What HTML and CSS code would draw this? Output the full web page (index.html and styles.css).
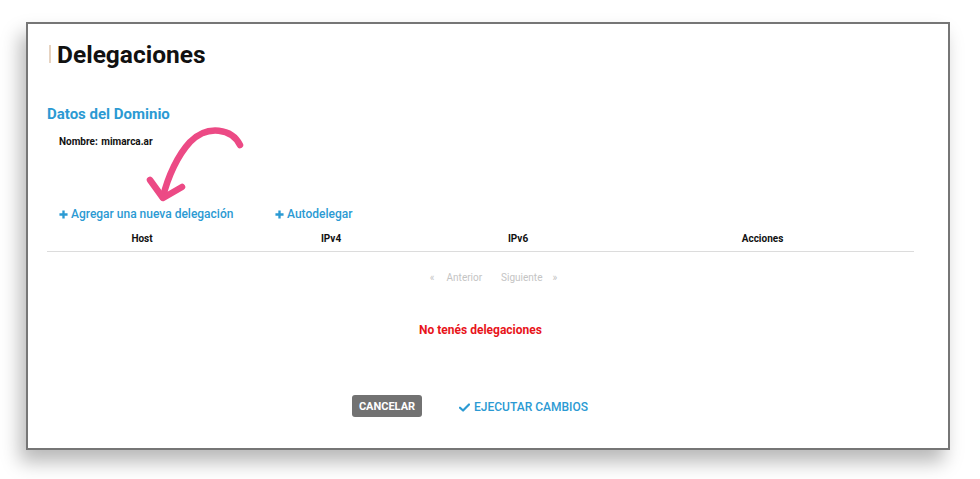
FILE: index.html
```html
<!DOCTYPE html>
<html lang="es">
<head>
<meta charset="utf-8">
<title>Delegaciones</title>
<link rel="stylesheet" href="styles.css">
</head>
<body>
<div class="frame">
  <header class="page-head">
    <span class="head-bar"></span>
    <h1 class="page-title">Delegaciones</h1>
  </header>

  <section class="domain">
    <h2 class="section-title">Datos del Dominio</h2>
    <p class="domain-name"><span class="label">Nombre:</span> mimarca.ar</p>
  </section>

  <div class="actions">
    <a class="action-link action-add" href="#"><svg class="plus" viewBox="0 0 10 10" width="9" height="9" aria-hidden="true"><path d="M5 0.5 V9.5 M0.5 5 H9.5" stroke="currentColor" stroke-width="2.6"/></svg>Agregar una nueva delegación</a>
    <a class="action-link" href="#"><svg class="plus" viewBox="0 0 10 10" width="9" height="9" aria-hidden="true"><path d="M5 0.5 V9.5 M0.5 5 H9.5" stroke="currentColor" stroke-width="2.6"/></svg>Autodelegar</a>
  </div>

  <div class="table-head">
    <div class="th">Host</div>
    <div class="th">IPv4</div>
    <div class="th">IPv6</div>
    <div class="th">Acciones</div>
  </div>

  <nav class="pager">
    <span class="pager-item"><span class="pager-mark">«</span>Anterior</span>
    <span class="pager-item">Siguiente<span class="pager-mark pager-mark-next">»</span></span>
  </nav>

  <p class="empty">No tenés delegaciones</p>

  <div class="footer-buttons">
    <button class="btn-cancel" type="button">CANCELAR</button>
    <a class="btn-run" href="#">
      <svg class="check" viewBox="0 0 12 10" width="11" height="9" aria-hidden="true">
        <path d="M1 5.2 L4.4 8.4 L11 1.6" fill="none" stroke="currentColor" stroke-width="2.4" stroke-linecap="round" stroke-linejoin="round"/>
      </svg>
      EJECUTAR CAMBIOS
    </a>
  </div>

  <svg class="hint-arrow" viewBox="0 0 110 90" width="110" height="90" aria-hidden="true">
    <path d="M100 25 C 92 9, 68 4, 50 22 C 38 35, 28 56, 23 77" fill="none" stroke="#ec4a85" stroke-width="6.5" stroke-linecap="round"/>
    <path d="M10 60 L23 78 L42 67" fill="none" stroke="#ec4a85" stroke-width="6.5" stroke-linecap="round" stroke-linejoin="round"/>
  </svg>
</div>
</body>
</html>
```

FILE: styles.css
```css
* {
  box-sizing: border-box;
}

html, body {
  margin: 0;
  background: #ffffff;
}

body {
  font-family: Roboto, "Liberation Sans", Arial, sans-serif;
  color: #111;
  padding: 22px 0 0 26px;
  min-height: 479px;
}

.frame {
  position: relative;
  width: 924px;
  height: 428px;
  border: 2px solid #767676;
  background: #fff;
  box-shadow: -6px 12px 18px rgba(0, 0, 0, 0.28);
  padding: 16px 34px 0 19px;
}

/* heading */
.page-head {
  display: flex;
  align-items: center;
  height: 28px;
}

.head-bar {
  width: 2px;
  height: 18px;
  background: #e6d3c1;
  margin: 0 6px 0 2px;
}

.page-title {
  margin: 0;
  font-size: 24.5px;
  font-weight: 700;
  color: #111;
}

/* domain data */
.domain {
  margin-top: 37px;
}

.section-title {
  margin: 0;
  font-size: 15px;
  font-weight: 700;
  color: #2b9ad3;
  line-height: 18px;
}

.domain-name {
  margin: 13px 0 0 12px;
  font-size: 10px;
  font-weight: 700;
  line-height: 12px;
}

.label {
  margin-right: 1px;
}

/* actions */
.actions {
  display: flex;
  margin: 58px 0 0 12px;
  height: 16px;
  align-items: center;
}

.action-link {
  display: flex;
  align-items: center;
  gap: 3px;
  font-size: 12px;
  font-weight: 500;
  color: #2b9ad3;
  text-decoration: none;
}

.action-add {
  width: 216px;
}

.plus {
  display: block;
}

/* table header */
.table-head {
  display: grid;
  grid-template-columns: 190px 188px 186px 303px;
  margin-top: 6px;
  height: 24px;
  border-bottom: 1px solid #dcdcdc;
  align-items: center;
}

.th {
  text-align: center;
  font-size: 10px;
  font-weight: 700;
  line-height: 12px;
  padding-bottom: 2px;
}

/* pagination */
.pager {
  display: flex;
  justify-content: center;
  gap: 19px;
  margin-top: 20px;
  padding-left: 26px;
  font-size: 10px;
  color: #c4c4c4;
  line-height: 12px;
}

.pager-mark {
  margin-right: 12px;
}

.pager-mark-next {
  margin: 0 0 0 10px;
}

.empty {
  margin: 39px 0 0;
  text-align: center;
  font-size: 12px;
  font-weight: 700;
  color: #e8141a;
  line-height: 14px;
}

/* footer buttons */
.footer-buttons {
  display: flex;
  align-items: center;
  margin: 58px 0 0 305px;
}

.btn-cancel {
  font-family: inherit;
  height: 22px;
  width: 70px;
  border: none;
  border-radius: 3px;
  background: #727272;
  color: #fff;
  font-size: 11px;
  font-weight: 700;
  padding: 0;
}

.btn-run {
  margin: 2px 0 0 37px;
  display: flex;
  align-items: center;
  gap: 4px;
  font-size: 12px;
  font-weight: 500;
  color: #2b9ad3;
  text-decoration: none;
}

.check {
  display: block;
}

/* pointer drawn over the form */
.hint-arrow {
  position: absolute;
  left: 112px;
  top: 96px;
}
```
